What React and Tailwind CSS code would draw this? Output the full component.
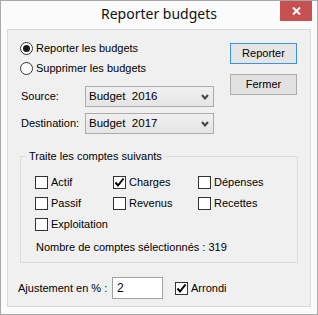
import React, { useState } from "react";

function Radio({ checked, label, onClick }) {
  return (
    <div className="h-[20px] flex items-center cursor-default" onClick={onClick}>
      <span className="w-[13px] h-[13px] rounded-full border border-[#333] bg-white flex items-center justify-center">
        {checked && <span className="w-[7px] h-[7px] rounded-full bg-[#1a1a1a]" />}
      </span>
      <span className="ml-[3px]">{label}</span>
    </div>
  );
}

function Check({ checked, label, onClick }) {
  return (
    <div className="h-[13px] flex items-center cursor-default" onClick={onClick}>
      <span className="w-[13px] h-[13px] border border-[#333] bg-white flex items-center justify-center">
        {checked && (
          <svg width="11" height="11" viewBox="0 0 11 11">
            <path d="M1.5 5.5 L4 8.5 L9.5 1.5" fill="none" stroke="#000" strokeWidth="2" />
          </svg>
        )}
      </span>
      <span className="ml-[3px]">{label}</span>
    </div>
  );
}

function Select({ value }) {
  return (
    <div className="h-[21px] w-[129px] border border-[#acacac] bg-gradient-to-b from-[#f0f0f0] to-[#e5e5e5] flex items-center justify-between pl-[3px] pr-[4px]">
      <span className="whitespace-pre text-[11.5px]">{value}</span>
      <svg width="8" height="6" viewBox="0 0 8 6">
        <path d="M1 1 L4 4.5 L7 1" fill="none" stroke="#444" strokeWidth="2" />
      </svg>
    </div>
  );
}

export default function App() {
  const [mode, setMode] = useState("reporter");
  const [accounts, setAccounts] = useState({
    Actif: false,
    Charges: true,
    Dépenses: false,
    Passif: false,
    Revenus: false,
    Recettes: false,
    Exploitation: false,
  });
  const [arrondi, setArrondi] = useState(true);

  const toggle = (k) => setAccounts((a) => ({ ...a, [k]: !a[k] }));

  return (
    <div
      className="w-[318px] h-[315px] border border-[#a9a9a9] bg-[#fbfbfb] flex flex-col text-[11px] text-black"
      style={{ fontFamily: '"Liberation Sans", Arial, sans-serif' }}
    >
      {/* title bar */}
      <div className="relative h-[28px] flex items-center justify-center">
        <span className="text-[14px] text-[#111] leading-none pb-[2px]" style={{ fontFamily: '"Noto Sans", sans-serif' }}>
          Reporter budgets
        </span>
        <div className="absolute right-[5px] top-0 w-[32px] h-[20px] bg-[#c75050] flex items-center justify-center">
          <svg width="9" height="8" viewBox="0 0 9 8">
            <path d="M1 0.5 L8 7.5 M8 0.5 L1 7.5" stroke="#fff" strokeWidth="2" />
          </svg>
        </div>
      </div>

      {/* client area */}
      <div className="flex-1 mx-[6px] mb-[7px] border border-[#dadada] bg-[#f0f0f0] flex flex-col">
        <div className="flex justify-between">
          <div className="ml-[12px] mt-[8px] flex flex-col">
            <Radio checked={mode === "reporter"} label="Reporter les budgets" onClick={() => setMode("reporter")} />
            <Radio checked={mode === "supprimer"} label="Supprimer les budgets" onClick={() => setMode("supprimer")} />
            <div className="mt-[8px] flex items-center">
              <span className="w-[64px] ml-[1px]">Source:</span>
              <Select value="Budget  2016" />
            </div>
            <div className="mt-[6px] flex items-center">
              <span className="w-[64px] ml-[1px]">Destination:</span>
              <Select value="Budget  2017" />
            </div>
          </div>
          <div className="mr-[13px] mt-[13px] flex flex-col gap-[10px]">
            <button className="w-[67px] h-[21px] border border-[#3c93e6] bg-[#e5e5e5]">Reporter</button>
            <button className="w-[67px] h-[21px] border border-[#adadad] bg-[#e1e1e1]">Fermer</button>
          </div>
        </div>

        <fieldset className="mx-[12px] mt-[15px] border border-[#dcdcdc] pl-[6px] pt-[13px] pb-[8px]">
          <legend className="px-[2px] leading-[14px]">Traite les comptes suivants</legend>
          <div className="ml-[8px] grid grid-cols-[78px_85px_auto] gap-y-[8px]">
            {Object.keys(accounts).map((k) => (
              <Check key={k} checked={accounts[k]} label={k} onClick={() => toggle(k)} />
            ))}
          </div>
          <div className="ml-[9px] mt-[9px] leading-[14px]">Nombre de comptes sélectionnés : 319</div>
        </fieldset>

        <div className="mt-[14px] ml-[10px] h-[22px] flex items-center">
          <span className="w-[94px] whitespace-nowrap">Ajustement en % :</span>
          <div className="w-[51px] h-[22px] border border-[#a0a0a0] bg-white flex items-center pl-[4px] text-[12px]">2</div>
          <div className="ml-[12px]">
            <Check checked={arrondi} label="Arrondi" onClick={() => setArrondi(!arrondi)} />
          </div>
        </div>
      </div>
    </div>
  );
}
